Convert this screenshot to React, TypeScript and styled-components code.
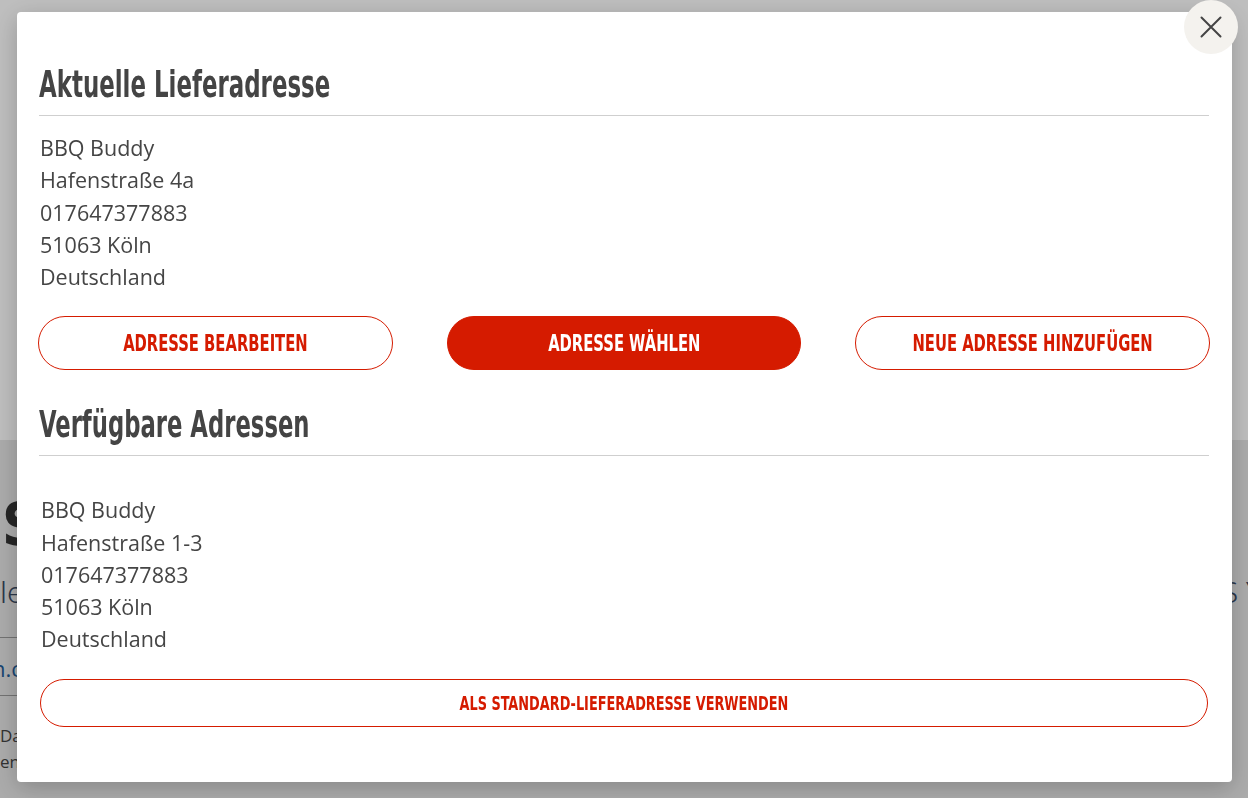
import React from "react";
import styled, { createGlobalStyle } from "styled-components";

const GlobalStyle = createGlobalStyle`
  * { box-sizing: border-box; }
  html, body { margin: 0; padding: 0; overflow: hidden; }
  body { font-family: "Open Sans", "Liberation Sans", sans-serif; background: #fff; }
`;

const condensed = `"DejaVu Sans Condensed", "DejaVu Sans", sans-serif`;

/* narrow display face: the condensed face, narrowed further */
const Squeeze = styled.span<{ $scale: number; $origin?: string }>`
  display: inline-block;
  white-space: nowrap;
  transform: scaleX(${(p) => p.$scale});
  transform-origin: ${(p) => p.$origin ?? "center"};
`;

/* ---------- page behind the dialog ---------- */
const Page = styled.div`
  width: 1248px;
  height: 798px;
  display: flex;
  flex-direction: column;
  overflow: hidden;
`;

const PageHeader = styled.header`
  height: 440px;
  background: #ffffff;
  flex-shrink: 0;
`;

const PageMain = styled.main`
  flex: 1;
  background: #e6e6e6;
  padding: 56px 0 0 2px;
  display: flex;
  flex-direction: column;
`;

const PageTitle = styled.h1`
  margin: 0;
  font-family: ${condensed};
  font-weight: 700;
  font-size: 58px;
  line-height: 58px;
  color: #333;
  white-space: nowrap;
`;

const PageLead = styled.div`
  margin: 20px -14px 27px -2px;
  display: flex;
  justify-content: space-between;
  font-family: "Noto Sans", sans-serif;
  font-weight: 300;
  font-size: 30px;
  line-height: 36px;
  color: #3a4a63;
  white-space: nowrap;
`;

const PageRule = styled.div`
  height: 1px;
  background: #9a9a9a;
  margin-left: -2px;
  width: 40px;
`;

const PageLink = styled.div`
  padding: 16px 0 13px;
  font-size: 22px;
  line-height: 28px;
  color: #1f5c99;
  margin-left: -10px;
  white-space: nowrap;
`;

const PageSmall = styled.div`
  margin-top: 27px;
  font-size: 17px;
  line-height: 26px;
  color: #444;
  margin-left: -2px;
  white-space: nowrap;
`;

/* ---------- dialog ---------- */
const Overlay = styled.div`
  position: fixed;
  inset: 0;
  background: rgba(0, 0, 0, 0.255);
  padding: 12px 16px 0 17px;
`;

const Modal = styled.div`
  position: relative;
  width: 1215px;
  background: #ffffff;
  border-radius: 4px;
  box-shadow: 0 6px 24px rgba(0, 0, 0, 0.22);
  padding: 52px 22px 55px 21px;
`;

const CloseButton = styled.button`
  position: absolute;
  top: -12px;
  right: -6px;
  width: 54px;
  height: 54px;
  border-radius: 50%;
  border: none;
  background: #f4f2ee;
  display: flex;
  align-items: center;
  justify-content: center;
  padding: 0;
  cursor: pointer;
  color: #444;
`;

const SectionTitle = styled.h2<{ $gap?: number }>`
  margin: ${(p) => p.$gap ?? 0}px 1px 0;
  padding: 0 0 11px;
  border-bottom: 1px solid #cfcfcf;
  font-family: ${condensed};
  font-weight: 700;
  font-size: 38px;
  line-height: 40px;
  color: #444;
  white-space: nowrap;
`;

const Address = styled.address<{ $top: number; $inset: number }>`
  margin: ${(p) => p.$top}px 0 0 ${(p) => p.$inset}px;
  font-style: normal;
  font-size: 21.5px;
  line-height: 32.25px;
  color: #454545;
`;

const ButtonRow = styled.div`
  margin-top: 23px;
  display: grid;
  grid-template-columns: repeat(3, minmax(0, 1fr));
  column-gap: 54px;
`;

const PillButton = styled.button<{ $filled?: boolean; $height?: number; $size?: number }>`
  height: ${(p) => p.$height ?? 54}px;
  width: 100%;
  min-width: 0;
  border-radius: 999px;
  border: 1px solid #d51b00;
  background: ${(p) => (p.$filled ? "#d51b00" : "#ffffff")};
  color: ${(p) => (p.$filled ? "#ffffff" : "#d51b00")};
  font-family: ${condensed};
  font-weight: 700;
  font-size: ${(p) => p.$size ?? 22.5}px;
  text-transform: uppercase;
  cursor: pointer;
  padding: 0;
  display: flex;
  align-items: center;
  justify-content: center;
  overflow: visible;
`;

const Card = styled.div`
  margin: 0 2px;
  padding-top: 38px;
`;

const CardButton = styled.div`
  margin-top: 23px;
`;

const CloseIcon = () => (
  <svg width="22" height="22" viewBox="0 0 22 22" fill="none">
    <path d="M1.5 1.5 L20.5 20.5 M20.5 1.5 L1.5 20.5" stroke="currentColor" strokeWidth="2" strokeLinecap="round" />
  </svg>
);

export default function App() {
  return (
    <>
      <GlobalStyle />
      <Page>
        <PageHeader />
        <PageMain>
          <PageTitle>SHOP</PageTitle>
          <PageLead>
            <span>letzte Bestellungen ansehen</span>
            <span>S Y</span>
          </PageLead>
          <PageRule />
          <PageLink>n.com</PageLink>
          <PageRule />
          <PageSmall>
            Daten
            <br />
            en
          </PageSmall>
        </PageMain>
      </Page>
      <Overlay>
        <Modal role="dialog">
          <CloseButton aria-label="Schließen">
            <CloseIcon />
          </CloseButton>
          <SectionTitle>
            <Squeeze $scale={0.67} $origin="left">Aktuelle Lieferadresse</Squeeze>
          </SectionTitle>
          <Address $top={16} $inset={2}>
            BBQ Buddy
            <br />
            Hafenstraße 4a
            <br />
            017647377883
            <br />
            51063 Köln
            <br />
            Deutschland
          </Address>
          <ButtonRow>
            <PillButton>
              <Squeeze $scale={0.73}>Adresse bearbeiten</Squeeze>
            </PillButton>
            <PillButton $filled>
              <Squeeze $scale={0.73}>Adresse wählen</Squeeze>
            </PillButton>
            <PillButton>
              <Squeeze $scale={0.73}>Neue Adresse hinzufügen</Squeeze>
            </PillButton>
          </ButtonRow>
          <SectionTitle $gap={34}>
            <Squeeze $scale={0.665} $origin="left">Verfügbare Adressen</Squeeze>
          </SectionTitle>
          <Card>
            <Address $top={0} $inset={1}>
              BBQ Buddy
              <br />
              Hafenstraße 1-3
              <br />
              017647377883
              <br />
              51063 Köln
              <br />
              Deutschland
            </Address>
            <CardButton>
              <PillButton $height={48} $size={20}>
                <Squeeze $scale={0.715}>Als Standard-Lieferadresse verwenden</Squeeze>
              </PillButton>
            </CardButton>
          </Card>
        </Modal>
      </Overlay>
    </>
  );
}
